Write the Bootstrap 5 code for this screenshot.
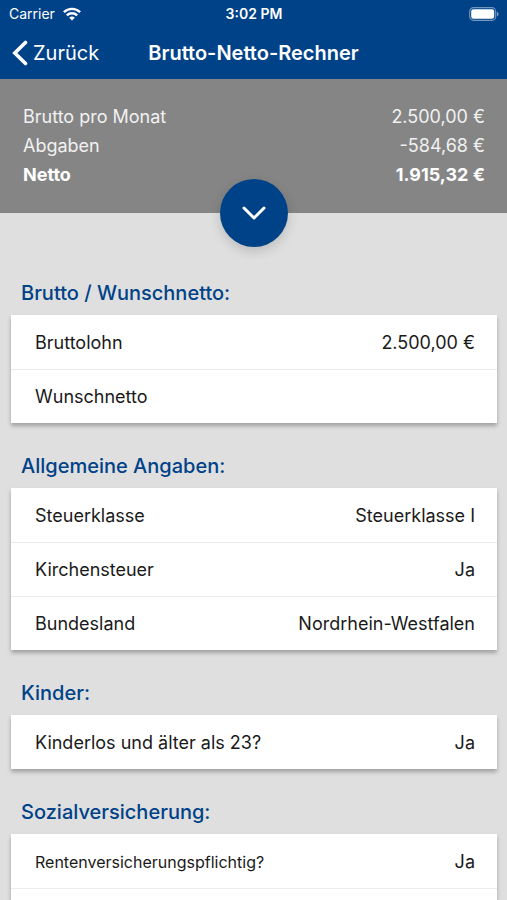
<!DOCTYPE html>
<html lang="de">
<head>
<meta charset="utf-8">
<meta name="viewport" content="width=device-width, initial-scale=1">
<title>Brutto-Netto-Rechner</title>
<link href="https://cdn.jsdelivr.net/npm/bootstrap@5.3.0/dist/css/bootstrap.min.css" rel="stylesheet">
<style>
  :root { --brand: #004288; }
  body { font-family: Inter, "Liberation Sans", sans-serif; background: #dfdfdf; color: #1a1a1a; font-size: 18px; line-height: 24px; }
  .app-top { background: var(--brand); color: #fff; }
  .status-line { font-size: 14px; line-height: 27px; padding: 0 8px 0 9px; }
  .status-line .clock { font-weight: 600; }
  .title-line { height: 52px; padding: 0 12px; }
  .title-line h1 { font-size: 20px; line-height: 24px; font-weight: 600; }
  .back-link { font-size: 20px; }
  .summary { background: #858585; color: #f1f1f1; padding: 23px 22px 24px 23px; line-height: 29px; }
  .summary .net { color: #fff; font-weight: 700; }
  .toggle-btn { width: 68px; height: 68px; background: var(--brand); box-shadow: 0 4px 12px rgba(0, 0, 0, .16); z-index: 2; }
  .toggle-btn:hover { background: #00386f; }
  .form-scroll { padding: 68px 10px 0 11px; scrollbar-width: none; }
  .form-scroll::-webkit-scrollbar { display: none; }
  .group { margin-bottom: 31px; }
  .group h2 { color: var(--brand); font-size: 20px; line-height: 24px; font-weight: 500; margin: 0 0 10px; padding-left: 10px; }
  .sheet { background: #fff; box-shadow: 0 3px 4px rgba(0, 0, 0, .28); }
  .field { height: 54px; padding: 1px 22px 0 24px; }
  .field + .field { border-top: 1px solid #ececec; padding-top: 0; }
  .field label { white-space: nowrap; }
  .field input, .field select { appearance: none; border: 0; background: transparent; color: inherit; padding: 0; min-width: 0; text-align: right; text-align-last: right; }
  .field .long-label { font-size: 16px; }
</style>
<script src="https://cdn.jsdelivr.net/npm/bootstrap@5.3.0/dist/js/bootstrap.bundle.min.js" defer></script>
</head>
<body class="d-flex flex-column vh-100 overflow-hidden">
<header class="app-top flex-shrink-0">
  <div class="status-line row g-0 align-items-center">
    <div class="col d-flex align-items-center gap-2">Carrier
      <svg width="18" height="14" viewBox="0 0 18 14" fill="none" stroke="#fff" stroke-width="2.4" aria-hidden="true"><path d="M.9 5.2C5.4.8 12.6.8 17.1 5.2M3.8 8.4c2.9-2.8 7.5-2.8 10.4 0"/><path d="M9 13.6 6.2 10.7c1.5-1.6 4.1-1.6 5.6 0z" fill="#fff" stroke="none"/></svg>
    </div>
    <div class="col-auto clock">3:02 PM</div>
    <div class="col d-flex justify-content-end">
      <svg width="30" height="14" viewBox="0 0 30 14" aria-label="Akku voll" role="img"><rect x=".7" y=".7" width="26" height="12.6" rx="3.8" fill="none" stroke="#fff" stroke-opacity=".45" stroke-width="1.2"/><rect x="2.2" y="2.2" width="23" height="9.6" rx="2.2" fill="#fff"/><path d="M28 4.7c2 .8 2 3.8 0 4.6z" fill="#fff" fill-opacity=".5"/></svg>
    </div>
  </div>
  <div class="title-line row g-0 align-items-center">
    <div class="col d-flex">
      <a href="#" class="back-link d-flex align-items-center gap-1 text-white text-decoration-none">
        <svg width="17" height="26" viewBox="0 0 17 26" fill="none" stroke="#fff" stroke-width="3.6" stroke-linecap="round" aria-hidden="true"><path d="M13.5 2.5 2.8 13l10.7 10.5"/></svg>Zurück</a>
    </div>
    <h1 class="col-auto m-0">Brutto-Netto-Rechner</h1>
    <div class="col"></div>
  </div>
</header>
<section class="summary position-relative flex-shrink-0" aria-label="Ergebnis">
  <dl class="m-0">
    <div class="d-flex justify-content-between"><dt class="fw-normal">Brutto pro Monat</dt><dd class="m-0">2.500,00 €</dd></div>
    <div class="d-flex justify-content-between"><dt class="fw-normal">Abgaben</dt><dd class="m-0">-584,68 €</dd></div>
    <div class="d-flex justify-content-between net"><dt>Netto</dt><dd class="m-0">1.915,32 €</dd></div>
  </dl>
  <button type="button" class="toggle-btn btn rounded-circle border-0 p-0 d-flex align-items-center justify-content-center position-absolute top-100 start-50 translate-middle" aria-label="Details anzeigen">
    <svg width="24" height="14" viewBox="0 0 24 14" fill="none" stroke="#fff" stroke-width="3" stroke-linecap="round" stroke-linejoin="round" aria-hidden="true"><path d="m2 2 10 10L22 2"/></svg>
  </button>
</section>
<main class="form-scroll flex-grow-1 overflow-auto">
  <form>
    <section class="group">
      <h2>Brutto / Wunschnetto:</h2>
      <div class="sheet">
        <div class="field d-flex align-items-center gap-3"><label for="gross">Bruttolohn</label><input class="flex-grow-1" id="gross" type="text" value="2.500,00 €"></div>
        <div class="field d-flex align-items-center gap-3"><label for="wish">Wunschnetto</label><input class="flex-grow-1" id="wish" type="text"></div>
      </div>
    </section>
    <section class="group">
      <h2>Allgemeine Angaben:</h2>
      <div class="sheet">
        <div class="field d-flex align-items-center gap-3"><label for="taxclass">Steuerklasse</label><select class="flex-grow-1" id="taxclass"><option>Steuerklasse I</option></select></div>
        <div class="field d-flex align-items-center gap-3"><label for="church">Kirchensteuer</label><select class="flex-grow-1" id="church"><option>Ja</option></select></div>
        <div class="field d-flex align-items-center gap-3"><label for="state">Bundesland</label><select class="flex-grow-1" id="state"><option>Nordrhein-Westfalen</option></select></div>
      </div>
    </section>
    <section class="group">
      <h2>Kinder:</h2>
      <div class="sheet">
        <div class="field d-flex align-items-center gap-3"><label for="childless">Kinderlos und älter als 23?</label><select class="flex-grow-1" id="childless"><option>Ja</option></select></div>
      </div>
    </section>
    <section class="group">
      <h2>Sozialversicherung:</h2>
      <div class="sheet">
        <div class="field d-flex align-items-center gap-3"><label class="long-label" for="pension">Rentenversicherungspflichtig?</label><select class="flex-grow-1" id="pension"><option>Ja</option></select></div>
        <div class="field"></div>
      </div>
    </section>
  </form>
</main>
</body>
</html>
